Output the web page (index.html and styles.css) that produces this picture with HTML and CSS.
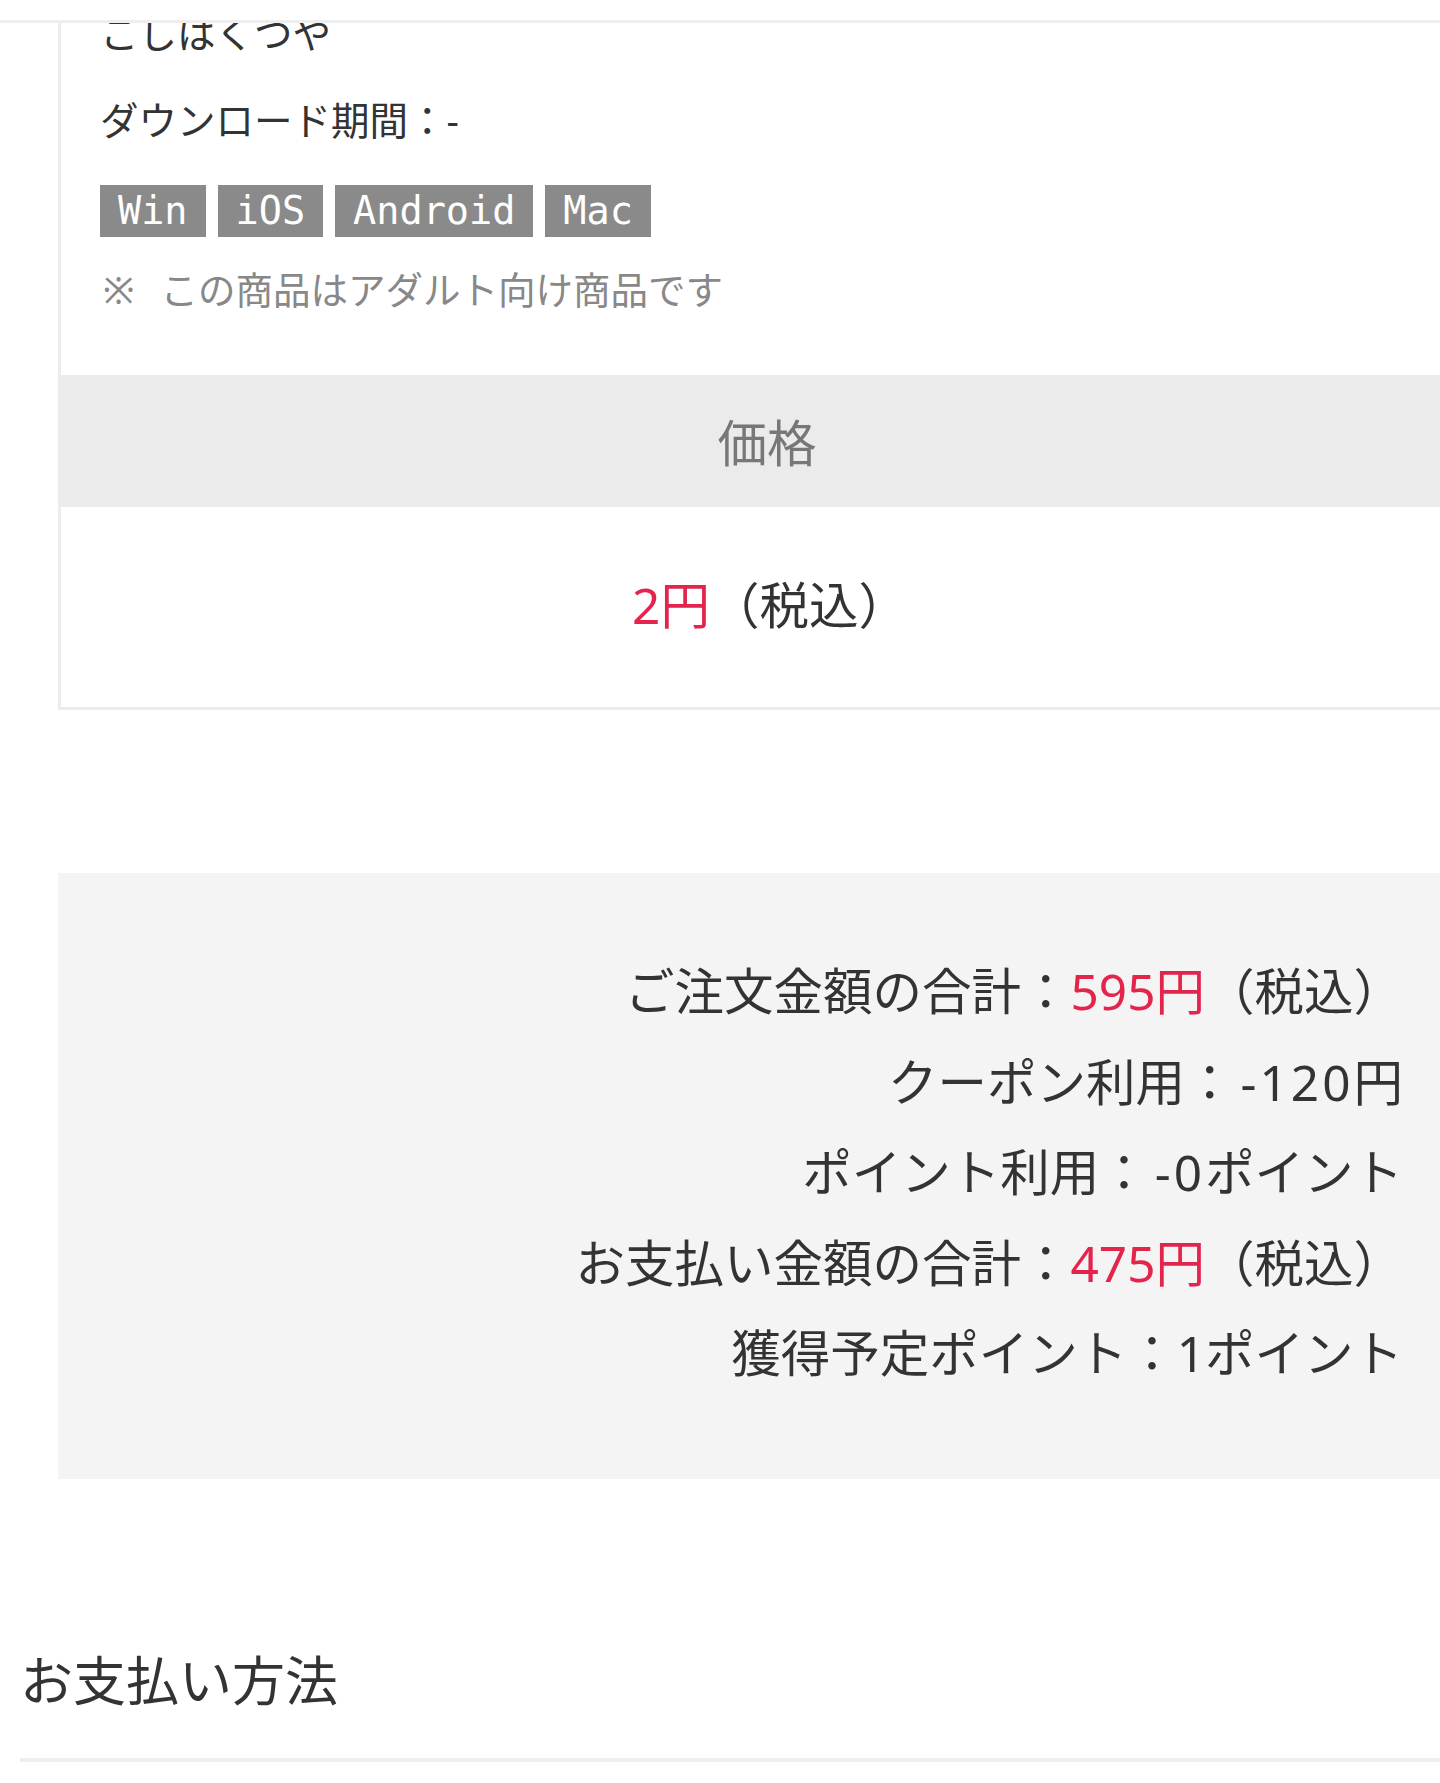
FILE: index.html
```html
<!DOCTYPE html>
<html lang="ja">
	<head>
		<meta charset="UTF-8">
		<meta name="viewport" content="width=device-width, initial-scale=1.0">
		<title>ご注文内容の確認</title>
		<link rel="stylesheet" href="styles.css">
	</head>
	<body>
		<div class="topbar"></div>
		<div class="page">
			<div class="item">
				<div class="info">
					<p>こしはくつや</p>
					<p>ダウンロード期間：-</p>
					<ul class="tags">
						<li>Win</li>
						<li>iOS</li>
						<li>Android</li>
						<li>Mac</li>
					</ul>
					<p class="note"><span class="mark">※</span>この商品はアダルト向け商品です</p>
				</div>
				<div class="price-head">価格</div>
				<div class="price-body">
					<span class="red">2円</span>（税込）
				</div>
			</div>

			<div class="summary">
				<p>ご注文金額の合計：<span class="red">595円</span>（税込）</p>
				<p>クーポン利用：<span class="minus">-120</span>円</p>
				<p>ポイント利用：<span class="minus">-0</span>ポイント</p>
				<p>お支払い金額の合計：<span class="red">475円</span>（税込）</p>
				<p>獲得予定ポイント：1ポイント</p>
			</div>

			<div class="pay">
				<h2>お支払い方法</h2>
			</div>
		</div>
	</body>
</html>
```

FILE: styles.css
```css
*{
	margin: 0;
	padding: 0;
}
html,body{
	overflow: hidden;
}
body{
	background: #fff;
	color: #333;
	font-family: "Noto Sans", "Noto Sans CJK JP", sans-serif;
	font-size: 38.5px;
}
.topbar{
	position: fixed;
	top: 0px;
	left: 0px;
	right: 0px;
	height: 20px;
	background: #fff;
	border-bottom: 3px solid #eee;
	z-index: 9;
}
.page{
	width: 1534px;
}
.item{
	margin: 0 58px;
	background: #fff;
	border-left: 3px solid #ececec;
	border-right: 3px solid #ececec;
	border-bottom: 3px solid #ececec;
}
.info{
	padding: 4px 0 56px 39px;
}
.info p{
	line-height: 58px;
	margin-bottom: 29px;
}
.info p:nth-child(2){
	margin-bottom: 36px;
}
.tags{
	list-style: none;
	display: flex;
	gap: 12px;
	margin-bottom: 24px;
}
.tags li{
	background: #8a8a8a;
	color: #fff;
	font-family: "DejaVu Sans Mono", monospace;
	font-size: 38.5px;
	line-height: 52px;
	padding: 0 18px;
}
.info .note{
	color: #888;
	font-size: 37.5px;
	margin-bottom: 0;
}
.note .mark{
	margin: 0 26px 0 3px;
}
.price-head{
	height: 132px;
	background: #ebebeb;
	color: #777;
	font-size: 49.5px;
	display: flex;
	align-items: center;
	justify-content: center;
}
.price-body{
	height: 192px;
	padding: 0 0 8px 6px;
	font-size: 49.5px;
	display: flex;
	align-items: center;
	justify-content: center;
}
.red{
	color: #e3244b;
}
.summary{
	margin: 163px 58px 0;
	padding: 73px 73px 80px;
	background: #f4f4f4;
	text-align: right;
	font-size: 49.5px;
}
.summary p{
	line-height: 90.5px;
}
.minus{
	letter-spacing: 3px;
	margin-left: 6px;
}
.pay{
	margin: 161px 0 0 20px;
}
.pay h2{
	font-size: 53px;
	font-weight: normal;
	line-height: 82px;
	padding-bottom: 36px;
	border-bottom: 4px solid #eee;
}
```
